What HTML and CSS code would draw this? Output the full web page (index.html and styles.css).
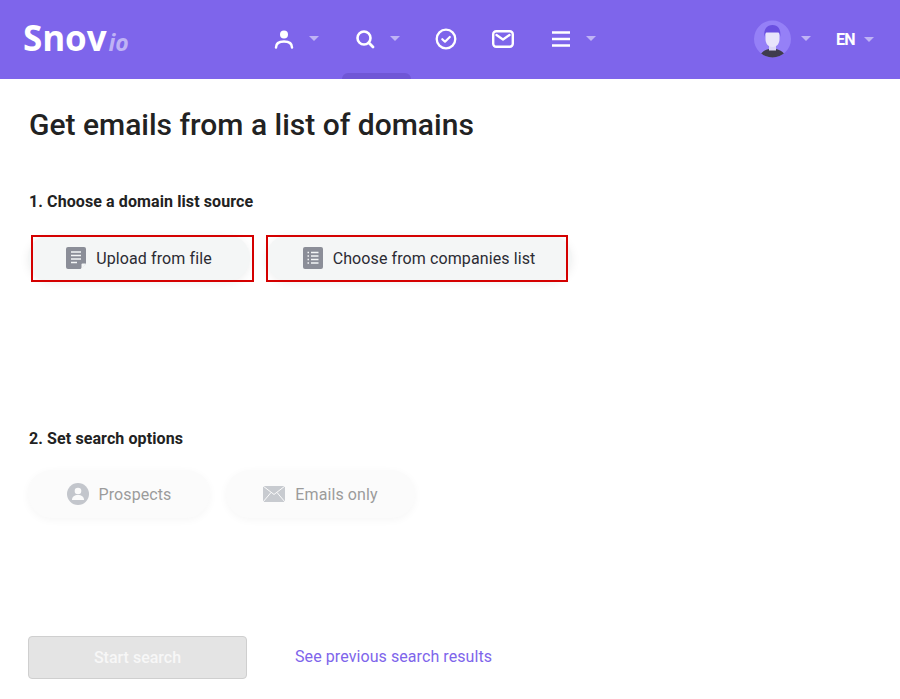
FILE: index.html
```html
<!DOCTYPE html>
<html lang="en">
<head>
<meta charset="utf-8">
<title>Get emails from a list of domains</title>
<link rel="stylesheet" href="styles.css">
</head>
<body>
<header class="topbar">
  <a class="logo"><span class="logo-main">Snov</span><span class="logo-io">io</span></a>
  <nav class="nav">
    <a class="nav-item nav-person">
      <svg class="nav-icon" viewBox="0 0 20 20" width="20" height="20"><circle cx="10" cy="5.500" r="4" fill="#fff"/><path d="M2 18.500c0-3.800 3-6 8-6s8 2.200 8 6" fill="none" stroke="#fff" stroke-width="2.500" stroke-linecap="round"/></svg>
      <span class="caret"></span>
    </a>
    <a class="nav-item nav-search">
      <svg class="nav-icon" viewBox="0 0 20 20" width="20" height="20"><circle cx="9" cy="9" r="6.500" fill="none" stroke="#fff" stroke-width="2.600"/><path d="M13.800 13.800L18 18" stroke="#fff" stroke-width="2.800" stroke-linecap="round"/></svg>
      <span class="caret"></span>
    </a>
    <a class="nav-item nav-check">
      <svg class="nav-icon" viewBox="0 0 22 22" width="22" height="22"><circle cx="11" cy="11" r="9.300" fill="none" stroke="#fff" stroke-width="2.300"/><path d="M7.300 11.200l2.700 2.500 4.800-4.700" fill="none" stroke="#fff" stroke-width="2.200" stroke-linecap="round" stroke-linejoin="round"/></svg>
    </a>
    <a class="nav-item nav-mail">
      <svg class="nav-icon" viewBox="0 0 22 18" width="22" height="18"><rect x="1.200" y="1.200" width="19.600" height="15.600" rx="3" fill="none" stroke="#fff" stroke-width="2.400"/><path d="M4.500 5l6.500 4.500L17.500 5" fill="none" stroke="#fff" stroke-width="2.300" stroke-linecap="round" stroke-linejoin="round"/></svg>
    </a>
    <a class="nav-item nav-menu">
      <svg class="nav-icon" viewBox="0 0 18 16" width="18" height="16"><path d="M0 1.500h18M0 8h18M0 14.500h18" stroke="#fff" stroke-width="2.600"/></svg>
      <span class="caret"></span>
    </a>
    <span class="nav-tab"></span>
  </nav>
  <div class="account">
    <a class="user">
      <svg class="avatar" viewBox="0 0 37 38" width="37" height="38"><defs><clipPath id="av"><circle cx="18.500" cy="19" r="18.500"/></clipPath></defs><circle cx="18.500" cy="19" r="18.500" fill="#9580f7"/><g clip-path="url(#av)"><path d="M5 38c1-5 5-8 10-9h7c5 1 9 4 10 9z" fill="#3f3c4d"/><rect x="15" y="24" width="7" height="6.500" fill="#dcd7f6"/><path d="M11.500 11h14v8c0 5-3 8-7 8s-7-3-7-8z" fill="#e8e4fb"/><path d="M10.500 17c-1.200-8 2.500-12 8-12s8.700 4 7.800 12c-.3-2.500-1-4.500-2.300-4.500h-11.500c-1 0-1.700 2-2 4.500z" fill="#6a4fe0"/></g></svg>
      <span class="caret"></span>
    </a>
    <a class="lang"><span class="lang-text">EN</span><span class="caret"></span></a>
  </div>
</header>
<main class="page">
  <h1 class="title">Get emails from a list of domains</h1>
  <section class="step step-source">
    <h2 class="step-title">1. Choose a domain list source</h2>
    <div class="choices">
      <button class="choice choice-upload">
        <svg class="choice-icon" viewBox="0 0 20 22" width="20" height="22"><path d="M2 0h16a2 2 0 0 1 2 2v14.500L14.500 22H2a2 2 0 0 1-2-2V2a2 2 0 0 1 2-2z" fill="#8b8e98"/><path d="M5 5h10M5 8.500h10M5 12h10M5 15.500h6" stroke="#f4f6f6" stroke-width="1.300"/><path d="M15.500 22v-4.500a1 1 0 0 1 1-1H20z" fill="#f4f6f6"/></svg>
        <span>Upload from file</span>
        <span class="marker"></span>
      </button>
      <button class="choice choice-list">
        <svg class="choice-icon" viewBox="0 0 20 22" width="20" height="22"><rect width="20" height="22" rx="2" fill="#8b8e98"/><path d="M8 5.500h7.500M8 9h7.500M8 12.500h7.500M8 16h7.500" stroke="#f4f6f6" stroke-width="1.300"/><path d="M4.500 5.500h1.500M4.500 9h1.500M4.500 12.500h1.500M4.500 16h1.500" stroke="#f4f6f6" stroke-width="1.300"/></svg>
        <span>Choose from companies list</span>
        <span class="marker"></span>
      </button>
    </div>
  </section>
  <section class="step step-options">
    <h2 class="step-title">2. Set search options</h2>
    <div class="choices">
      <button class="choice choice-off choice-prospects">
        <svg class="choice-icon" viewBox="0 0 22 22" width="22" height="22"><circle cx="11" cy="11" r="11" fill="#c3c6cc"/><circle cx="11" cy="8" r="3.300" fill="#fbfbfb"/><path d="M5 17c0-3.300 2.500-5 6-5s6 1.700 6 5z" fill="#fbfbfb"/></svg>
        <span>Prospects</span>
      </button>
      <button class="choice choice-off choice-emails">
        <svg class="choice-icon" viewBox="0 0 22 16" width="22" height="16"><rect width="22" height="16" fill="#c8cbd0"/><path d="M0 0l11 8.500L22 0M0 16l8-9.500M22 16l-8-9.500" fill="none" stroke="#fbfbfb" stroke-width="1"/></svg>
        <span>Emails only</span>
      </button>
    </div>
  </section>
  <div class="actions">
    <button class="start" disabled>Start search</button>
    <a class="previous">See previous search results</a>
  </div>
</main>
</body>
</html>
```

FILE: styles.css
```css
* { box-sizing: border-box; }
html, body { margin: 0; padding: 0; height: 100%; }
body { background: #fff; color: #222; font-family: Roboto, "Liberation Sans", sans-serif; overflow: hidden; }
a { color: inherit; text-decoration: none; }
.topbar { height: 79px; background: #7e65eb; display: flex; align-items: center; color: #fff; padding: 0 26px 0 23px; }
.logo { width: 245px; display: flex; align-items: baseline; font-family: "Open Sans", sans-serif; line-height: 1; padding-bottom: 4px; }
.logo-main { font-size: 35px; font-weight: 700; letter-spacing: -0.1px; }
.logo-io { font-size: 23px; font-weight: 700; font-style: italic; color: #bfb3f5; margin-left: 2px; }
.nav { position: relative; height: 79px; display: flex; align-items: center; flex: 1; }
.nav-item { display: flex; align-items: center; padding-bottom: 2px; }
.nav-icon { display: block; }
.caret { display: block; width: 0; height: 0; border-left: 5px solid transparent; border-right: 5px solid transparent; border-top: 5px solid #bfb3f5; }
.nav-item .caret { margin-left: 15px; }
.nav-person { margin-left: 6px; width: 81px; }
.nav-search { width: 80px; }
.nav-check { width: 57px; }
.nav-mail { width: 60px; }
.nav-menu .caret { margin-left: 16px; }
.nav-tab { position: absolute; left: 74px; bottom: 0; width: 69px; height: 6px; background: #6f56d6; border-radius: 6px 6px 0 0; }
.account { display: flex; align-items: center; }
.user { display: flex; align-items: center; padding-bottom: 1px; }
.user .caret { margin: 0 0 2px 10px; }
.avatar { display: block; }
.lang { display: flex; align-items: center; margin-left: 25px; font-size: 16px; font-weight: 700; letter-spacing: -0.6px; }
.lang .caret { margin-left: 9px; }
.page { padding: 0 0 0 28px; }
.title { margin: 0; padding: 28px 0 0 1px; font-size: 30px; line-height: 36px; font-weight: 500; color: #222; }
.step-title { margin: 0; padding-left: 1px; font-size: 16px; line-height: 20px; font-weight: 700; color: #222; letter-spacing: 0.1px; }
.step-source { padding-top: 49px; height: 286px; }
.step-options { height: 207px; }
.choices { display: flex; gap: 16px; margin-top: 23px; }
.step-options .choices { margin-top: 21px; }
.choice { position: relative; height: 46px; border: 0; border-radius: 24px; background: #f4f6f6; display: flex; align-items: center; justify-content: center; gap: 10px; font: 400 16px Roboto, sans-serif; letter-spacing: 0.1px; color: #2b2b33; box-shadow: 0 2px 10px rgba(0, 0, 0, 0.07); padding: 0; }
.choice-upload { width: 222px; }
.choice-list { width: 306px; }
.choice-off { background: #fbfbfb; color: #9b9b9b; height: 48px; box-shadow: 0 2px 8px rgba(0, 0, 0, 0.04); }
.choice-prospects { width: 182px; }
.choice-emails { width: 189px; }
.marker { position: absolute; top: 0; height: 47px; border: 2px solid #d40000; pointer-events: none; }
.choice-upload .marker { left: 3px; width: 223px; }
.choice-list .marker { left: 0; width: 302px; }
.actions { display: flex; align-items: center; gap: 48px; }
.start { width: 219px; height: 43px; border: 1px solid #cfcfcf; border-radius: 4px; background: #e4e4e4; color: #f7f7f7; font: 500 16px Roboto, sans-serif; padding: 0; }
.previous { color: #7e65eb; font-size: 16px; line-height: 20px; margin-top: -2px; letter-spacing: 0.08px; }
```
